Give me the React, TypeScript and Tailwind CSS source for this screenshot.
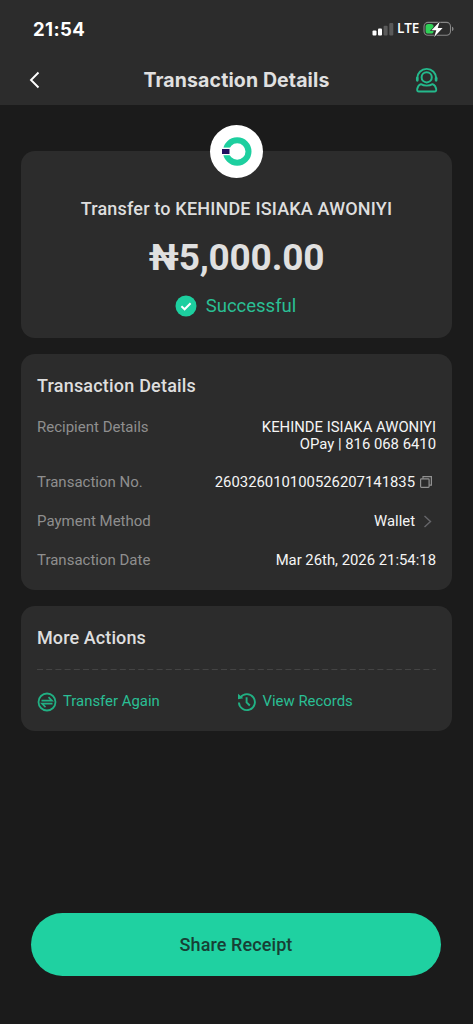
import type { ReactNode } from 'react';

function StatusBar() {
  return (
    <div className="flex h-[58px] items-center justify-between pl-[33px] pr-[19px] text-white">
      <span className="font-['Inter',sans-serif] text-[18.5px] font-bold leading-none tracking-[0.4px]">21:54</span>
      <div className="flex items-center">
        <svg className="h-3.5 w-[22px]" viewBox="0 0 22 14" fill="white">
          <rect x="0.5" y="8.6" width="4" height="4.9" rx="1" />
          <rect x="6" y="6.5" width="4" height="7" rx="1" />
          <rect x="11.6" y="3.7" width="4" height="9.8" rx="1" opacity="0.22" />
          <rect x="17.3" y="1" width="4" height="12.5" rx="1" opacity="0.22" />
        </svg>
        <span className="ml-[3px] font-['Open_Sans',sans-serif] text-[13.5px] font-semibold leading-none tracking-[-0.2px]">LTE</span>
        <svg className="ml-1 h-[18px] w-[31px]" viewBox="0 0 31 18">
          <rect x="1" y="2.4" width="26.5" height="12.8" rx="4" fill="none" stroke="#868686" strokeWidth="1.1" />
          <path d="M29 6.8v4.2c1-.4 1.5-1.2 1.5-2.1S30 7.2 29 6.8z" fill="#868686" />
          <rect x="2.6" y="4" width="8" height="9.6" rx="2.6" fill="#30d158" />
          <path d="M16.8 1.5 8.5 10.2h4.8l-2.1 6.7 8.4-8.9h-4.9z" fill="white" stroke="#2c2c2c" strokeWidth="1.4" paintOrder="stroke" />
        </svg>
      </div>
    </div>
  );
}

function SupportIcon() {
  return (
    <svg className="h-[26px] w-6" viewBox="0 0 24 26" fill="none" stroke="#24b98c" strokeLinecap="round" strokeLinejoin="round">
      <path d="M2.1 11.5a9.6 9.6 0 0 1 19.2 0" strokeWidth="1.9" />
      <path d="M2.3 11v2.3M21.1 11v2.3" strokeWidth="2.7" />
      <circle cx="11.7" cy="10.3" r="5.1" strokeWidth="2" />
      <path d="M5.9 17.1c3.2 2 8.400 2 11.600 0 1.900.7 3.300 2.700 3.700 4.900.3 1.600-.4 2.500-1.700 2.500H3.900c-1.300 0-2-.9-1.700-2.500.4-2.200 1.800-4.200 3.700-4.900z" strokeWidth="1.9" />
    </svg>
  );
}

function Logo() {
  return (
    <div className="absolute -top-[26px] left-[189px] flex h-[53px] w-[53px] items-center justify-center rounded-full bg-white">
      <svg className="h-[53px] w-[53px]" viewBox="0 0 53 53">
        <circle cx="27.2" cy="26.5" r="11.3" fill="none" stroke="#1dcf9f" strokeWidth="6" />
        <rect x="11" y="22.6" width="9.5" height="7.6" fill="white" />
        <rect x="12" y="24" width="7.5" height="5" fill="#210f60" />
      </svg>
    </div>
  );
}

function DetailRow({ label, children }: { label: string; children: ReactNode }) {
  return (
    <div className="flex items-start justify-between leading-[18px]">
      <span className="text-[15px] text-[#8f8f8f]">{label}</span>
      <div className="flex items-center text-right text-[14.85px] text-[#f5f5f5]">{children}</div>
    </div>
  );
}

export default function App() {
  return (
    <div className="flex h-[1024px] w-[473px] flex-col bg-[#1b1b1b] font-['Roboto',sans-serif]">
      <header className="h-[105px] bg-[#2c2c2c]">
        <StatusBar />
        <div className="grid h-11 grid-cols-[80px_1fr_80px] items-center">
          <svg className="ml-[29px] h-[18px] w-3" viewBox="0 0 12 18" fill="none" stroke="white" strokeWidth="1.9">
            <path d="M9.5 1.5 2 9l7.5 7.5" />
          </svg>
          <h1 className="text-center font-['Inter',sans-serif] text-[19.5px] font-bold leading-6 tracking-[0.12px] text-[#e0e0e0]">Transaction Details</h1>
          <div className="pl-[22px]">
            <SupportIcon />
          </div>
        </div>
      </header>

      <main className="flex flex-col gap-4 px-[21px] pt-[46px]">
        <section className="relative flex h-[187px] flex-col items-center rounded-[14px] bg-[#2c2c2c] pt-[46px]">
          <Logo />
          <p className="text-[18px] font-medium leading-6 tracking-[0.18px] text-[#dedede]">Transfer to KEHINDE ISIAKA AWONIYI</p>
          <p className="mt-[13px] text-[37px] font-bold leading-[48px] tracking-[-0.2px] text-[#e0e0e0]">₦5,000.00</p>
          <div className="mr-[2px] mt-3 flex items-center gap-[9px] text-[18.5px] leading-6 text-[#2abf94]">
            <svg className="h-[22px] w-[22px]" viewBox="0 0 22 22">
              <circle cx="11" cy="11" r="10.5" fill="#1dcf9f" />
              <path d="m6.4 11.3 3.2 3 6-6" fill="none" stroke="white" strokeWidth="2" />
            </svg>
            Successful
          </div>
        </section>

        <section className="h-[236px] rounded-[14px] bg-[#2c2c2c] px-4 pt-5">
          <h2 className="text-[18px] font-medium leading-6 tracking-[0.2px] text-[#dedede]">Transaction Details</h2>
          <div className="mt-5 flex flex-col gap-[21px]">
            <DetailRow label="Recipient Details">
              <div className="-mb-px pt-px leading-[17px]">
                <p>KEHINDE ISIAKA AWONIYI</p>
                <p>OPay | 816 068 6410</p>
              </div>
            </DetailRow>
            <DetailRow label="Transaction No.">
              <span>260326010100526207141835</span>
              <svg className="ml-[5px] mr-1 h-3 w-3" viewBox="0 0 12 12" fill="none" stroke="#919191" strokeWidth="1.2">
                <rect x="0.6" y="2.9" width="8.5" height="8.5" rx="0.8" />
                <path d="M3 2.800V.6h8.400v8.500H9.200" />
              </svg>
            </DetailRow>
            <DetailRow label="Payment Method">
              <span>Wallet</span>
              <svg className="ml-2 mr-1 h-[13px] w-[9px]" viewBox="0 0 9 13" fill="none" stroke="#66666a" strokeWidth="1.4">
                <path d="m1.5 1 6 5.500-6 5.500" />
              </svg>
            </DetailRow>
            <DetailRow label="Transaction Date">
              <span>Mar 26th, 2026 21:54:18</span>
            </DetailRow>
          </div>
        </section>

        <section className="h-[125px] rounded-[14px] bg-[#2c2c2c] px-4 pt-5">
          <h2 className="text-[18px] font-medium leading-6 tracking-[0.1px] text-[#dedede]">More Actions</h2>
          <svg className="mt-[19px] h-px w-full" viewBox="0 0 399 1">
            <path d="M0 .5h399" stroke="#444444" strokeDasharray="6 3.2" />
          </svg>
          <div className="mt-5 grid grid-cols-2 text-[14.9px] leading-5 text-[#2abf94]">
            <div className="flex items-center gap-[6px]">
              <svg className="mt-0.5 h-5 w-5" viewBox="0 0 20 20" fill="none" stroke="#21b083" strokeWidth="1.8">
                <circle cx="10" cy="10" r="8.5" />
                <path d="M4.500 8.600h10.500l-3.500-3.500M15.500 11.600H5l3.500 3.500" strokeWidth="1.6" />
              </svg>
              Transfer Again
            </div>
            <div className="flex items-center gap-[6px]">
              <svg className="mt-0.5 h-5 w-5" viewBox="0 0 20 20" fill="none" stroke="#21b083" strokeWidth="1.9">
                <path d="M3.500 5.300a8 8 0 1 1-1.600 5.200" />
                <path d="M9.600 5.300v5l3.200 3.200" />
                <path d="M1 1.800v5.400l5.300-.9z" fill="#21b083" stroke="none" />
              </svg>
              View Records
            </div>
          </div>
        </section>
      </main>

      <button className="mb-12 ml-[31px] mt-auto h-[63px] w-[410px] rounded-full bg-[#1fd1a1] text-[18px] font-medium leading-6 tracking-[0.1px] text-[#173f35]">
        Share Receipt
      </button>
    </div>
  );
}
